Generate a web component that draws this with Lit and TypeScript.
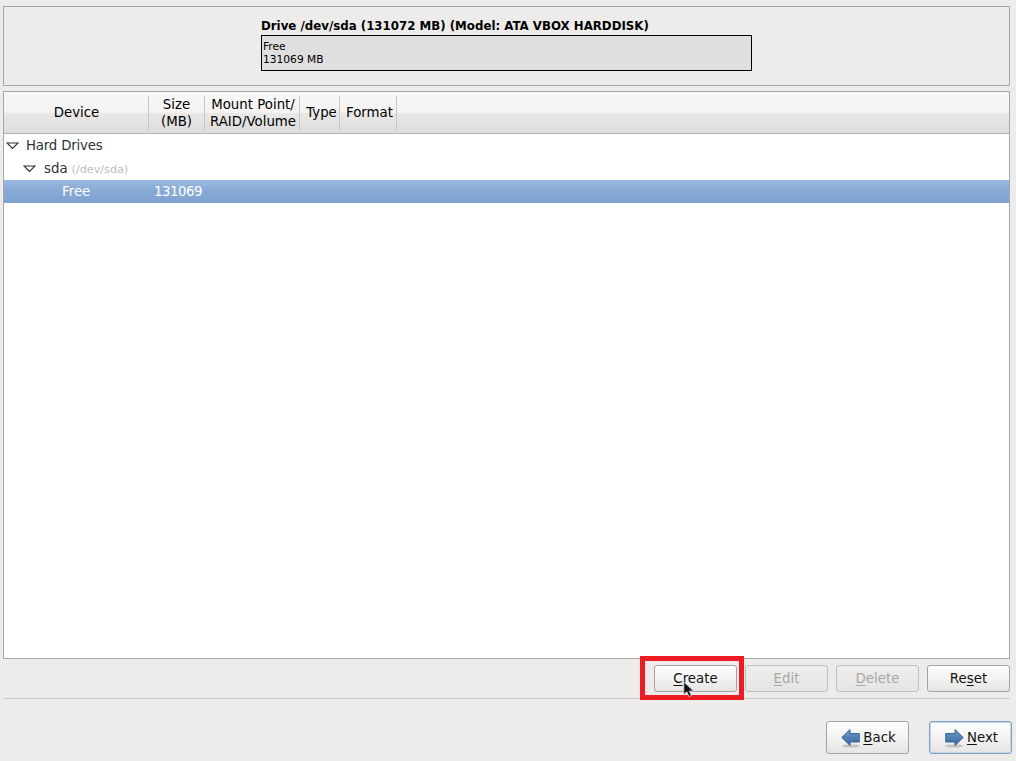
import { LitElement, html, css } from "lit";
import { customElement } from "lit/decorators.js";

@customElement("app-root")
export class AppRoot extends LitElement {
  static styles = css`
    :host { display: block; position: relative; width: 1016px; height: 761px; overflow: hidden; background: #edeceb; color: #000; font-family: "DejaVu Sans", sans-serif; font-size: 13.33px; }
    .page { display: flex; flex-direction: column; height: 761px; box-sizing: border-box; padding: 6px 6px 0 3px; }
    .drive { height: 80px; box-sizing: border-box; border: 1px solid #a6a6a6; padding: 11px 0 0 257px; flex: none; }
    .title { font-size: 11.8px; font-weight: 700; line-height: 16px; height: 16px; white-space: nowrap; }
    .bar { width: 491px; height: 36px; box-sizing: border-box; margin-top: 1px; border: 1px solid #000; background: #dfdfdf; font-size: 10.67px; line-height: 13px; padding: 4px 0 0 1px; }
    .tree { margin-top: 5px; height: 568px; box-sizing: border-box; border: 1px solid #a6a6a6; background: #fff; flex: none; }
    .thead { display: flex; height: 42px; box-sizing: border-box; border-bottom: 1px solid #b5b4b2; background: linear-gradient(#f9f8f7 0, #f4f3f2 50%, #e9e8e6 52%, #dedddb 100%); }
    .th { display: flex; align-items: center; justify-content: center; text-align: center; line-height: 17px; position: relative; white-space: nowrap; box-sizing: border-box; }
    .th::after { content: ""; position: absolute; right: 0; top: 4px; bottom: 3px; width: 1px; background: #c8c7c5; }
    .c1 { width: 145px; } .c2 { width: 56px; padding-right: 1px; } .c3 { width: 95px; padding-left: 1px; } .c4 { width: 40px; padding-left: 3px; } .c5 { width: 57px; padding-left: 2px; }
    .row { display: flex; align-items: center; height: 23px; white-space: nowrap; color: #2e3436; }
    .tri { width: 13px; height: 9px; flex: none; }
    .l1 { padding-left: 2px; gap: 7px; letter-spacing: -0.2px; }
    .l2 { padding-left: 19px; gap: 8px; }
    .dim { color: #bdbdbd; font-size: 11.2px; margin-left: -4px; padding-top: 1px; }
    .sel { color: #fff; background: linear-gradient(#9ab8df, #87a9d6 50%, #7ea2d0); }
    .free { width: 150px; padding-left: 58px; box-sizing: border-box; }
    .num { letter-spacing: -0.5px; }
    .actions { display: flex; justify-content: flex-end; gap: 8px; margin-top: 6px; flex: none; }
    .btn { display: flex; align-items: center; justify-content: center; box-sizing: border-box; width: 83px; height: 27px; border: 1px solid #a5a4a2; border-radius: 3px; background: linear-gradient(#fdfdfc, #f5f4f3 45%, #e6e5e3); color: #111; white-space: nowrap; }
    .btn.off { color: #a8a7a5; background: linear-gradient(#efeeed, #e6e5e4); border-color: #c0bfbd; }
    .sep { height: 1px; background: #c9c8c6; margin-top: 6px; flex: none; }
    .nav { display: flex; justify-content: flex-end; gap: 20px; margin-top: 22px; margin-right: -2px; flex: none; }
    .nav .btn { height: 33px; width: 83px; gap: 3px; padding-left: 2px; }
    .nav .btn.next { border-color: #7f9fc4; box-shadow: inset 0 0 0 1px #c5d6ea; }
    u { text-underline-offset: 2px; text-decoration-thickness: 1px; }
    .mark { position: absolute; left: 640px; top: 656px; width: 104px; height: 44px; box-sizing: border-box; border: 5px solid #ed1c24; pointer-events: none; }
    .cursor { position: absolute; left: 683px; top: 681px; width: 13px; height: 16px; }
  `;

  private tri() {
    return html`<svg class="tri" viewBox="0 0 13 9"><path d="M1 2H12L6.5 7.5Z" fill="#fff" stroke="#2e3436" stroke-width="1.2"/></svg>`;
  }

  render() {
    return html`
      <div class="page">
        <div class="drive">
          <div class="title">Drive /dev/sda (131072 MB) (Model: ATA VBOX HARDDISK)</div>
          <div class="bar">Free<br />131069 MB</div>
        </div>
        <div class="tree">
          <div class="thead">
            <div class="th c1">Device</div>
            <div class="th c2">Size<br />(MB)</div>
            <div class="th c3">Mount Point/<br />RAID/Volume</div>
            <div class="th c4">Type</div>
            <div class="th c5">Format</div>
          </div>
          <div class="row l1">${this.tri()}<span>Hard Drives</span></div>
          <div class="row l2">${this.tri()}<span>sda</span><span class="dim">(/dev/sda)</span></div>
          <div class="row sel"><span class="free">Free</span><span class="num">131069</span></div>
        </div>
        <div class="actions">
          <div class="btn"><span><u>C</u>reate</span></div>
          <div class="btn off"><span><u>E</u>dit</span></div>
          <div class="btn off"><span><u>D</u>elete</span></div>
          <div class="btn"><span>Re<u>s</u>et</span></div>
        </div>
        <div class="sep"></div>
        <div class="nav">
          <div class="btn">
            <svg width="19" height="20" viewBox="0 0 19 20"><defs><linearGradient id="ga" x1="0" y1="0" x2="0" y2="1"><stop offset="0" stop-color="#6f9bcb"/><stop offset="1" stop-color="#36669f"/></linearGradient></defs><ellipse cx="10" cy="18" rx="9" ry="1.6" fill="#c4c3c1"/><path d="M.8 9.5L9 1.5V5.5H18.3V14H9V17.5Z" fill="url(#ga)" stroke="#2f5d94" stroke-width=".9"/></svg>
            <span><u>B</u>ack</span>
          </div>
          <div class="btn next">
            <svg width="19" height="20" viewBox="0 0 19 20"><defs><linearGradient id="gb" x1="0" y1="0" x2="0" y2="1"><stop offset="0" stop-color="#6f9bcb"/><stop offset="1" stop-color="#36669f"/></linearGradient></defs><ellipse cx="9" cy="18" rx="9" ry="1.6" fill="#c4c3c1"/><path d="M18.2 9.5L10 1.5V5.5H.7V14H10V17.5Z" fill="url(#gb)" stroke="#2f5d94" stroke-width=".9"/></svg>
            <span><u>N</u>ext</span>
          </div>
        </div>
      </div>
      <div class="mark"></div>
      <svg class="cursor" viewBox="0 0 13 16"><path d="M.8.8V13.5L3.8 10.8 6 15.5 8.4 14.5 6.2 10H10.5Z" fill="#111" stroke="#d8d8d8" stroke-width=".8"/></svg>
    `;
  }
}
